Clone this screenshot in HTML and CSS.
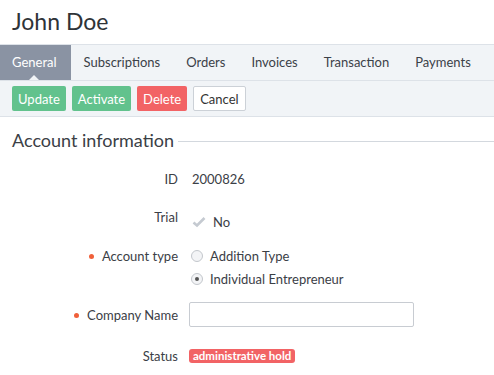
FILE: index.html
```html
<!DOCTYPE html>
<html lang="en">
<head>
  <meta charset="UTF-8" />
  <title>John Doe</title>
  <link rel="stylesheet" href="styles.css">
</head>
<body>
  <h1 class="title">John Doe</h1>

  <nav class="tabs">
    <a class="tab active">General</a>
    <a class="tab">Subscriptions</a>
    <a class="tab">Orders</a>
    <a class="tab">Invoices</a>
    <a class="tab">Transaction</a>
    <a class="tab">Payments</a>
  </nav>

  <div class="toolbar">
    <button class="btn green">Update</button>
    <button class="btn green">Activate</button>
    <button class="btn red">Delete</button>
    <button class="btn plain">Cancel</button>
  </div>

  <div class="section">
    <h2>Account information</h2>
  </div>

  <div class="form">
    <div class="row r-id">
      <div class="label">ID</div>
      <div class="value">2000826</div>
    </div>
    <div class="row r-trial">
      <div class="label">Trial</div>
      <div class="value trial">
        <svg width="14" height="12" viewBox="0 0 14 12"><path d="M1.5 6.5 L5 9.5 L12.5 2" fill="none" stroke="#c5cad1" stroke-width="2.6"/></svg>
        <span>No</span>
      </div>
    </div>
    <div class="row r-type">
      <div class="label req">Account type</div>
      <div class="value radios">
        <label class="radio"><span class="circle"></span>Addition Type</label>
        <label class="radio"><span class="circle on"></span>Individual Entrepreneur</label>
      </div>
    </div>
    <div class="row r-company">
      <div class="label req">Company Name</div>
      <div class="value"><input type="text" class="field"></div>
    </div>
    <div class="row r-status">
      <div class="label">Status</div>
      <div class="value"><span class="badge">administrative hold</span></div>
    </div>
  </div>
</body>
</html>
```

FILE: styles.css
```css
body {
  margin: 0;
  font-family: Lato, "Open Sans", Arial, sans-serif;
  color: #333;
  background: white;
}

.title {
  margin: 0;
  padding: 7px 12px 0;
  height: 37px;
  font-size: 23px;
  font-weight: normal;
  color: #2f3338;
}

.tabs {
  display: flex;
  height: 35px;
  background: #f1f4f7;
  border-top: 1px solid #dde2e8;
  border-bottom: 1px solid #dde2e8;
}

.tab {
  position: relative;
  padding: 0 13px;
  line-height: 35px;
  font-size: 13px;
  color: #3b4148;
  white-space: nowrap;
}

.tab.active {
  background: #8a93a3;
  color: white;
  padding: 0 14px 0 12px;
}

.tab.active::after {
  content: "";
  position: absolute;
  left: 29px;
  bottom: 0;
  border: 5px solid transparent;
  border-bottom-color: #f1f4f7;
  border-top: 0;
}

.toolbar {
  display: flex;
  gap: 6px;
  padding: 5px 12px;
  height: 25px;
  background: #f1f4f7;
  border-bottom: 1px solid #dde2e8;
}

.btn {
  height: 25px;
  padding: 0 6px;
  border: none;
  border-radius: 2px;
  font-family: inherit;
  font-size: 13px;
  color: white;
}

.green { background: #62c28d; }
.red { background: #f26365; }

.plain {
  background: white;
  color: #333;
  border: 1px solid #ccd1d7;
}

.section {
  display: flex;
  align-items: center;
  padding: 10px 0 0 12px;
}

.section h2 {
  margin: 0;
  font-size: 18px;
  font-weight: normal;
  color: #3b4046;
  line-height: 26px;
}

.section::after {
  content: "";
  flex: 1;
  height: 1px;
  margin-left: 4px;
  margin-top: 2px;
  background: #d3d8de;
}

.form {
  padding-top: 16px;
  font-size: 13px;
}

.row {
  display: flex;
}

.label {
  width: 192px;
  text-align: right;
  padding-right: 14px;
  box-sizing: border-box;
  color: #3b4046;
  line-height: 20px;
}

.req::before {
  content: "";
  display: inline-block;
  width: 5px;
  height: 5px;
  border-radius: 50%;
  background: #f0603a;
  margin-right: 8px;
  vertical-align: 2px;
}

.value {
  line-height: 20px;
  color: #3b4046;
}

.r-trial { margin-top: 18px; }

.trial {
  display: flex;
  align-items: center;
  gap: 7px;
  padding-top: 5px;
}

.r-type { margin-top: 14px; }

.radios {
  display: flex;
  flex-direction: column;
  gap: 3px;
  margin-left: -1px;
}

.radio {
  display: flex;
  align-items: center;
  gap: 7px;
}

.circle {
  width: 10px;
  height: 10px;
  border: 1px solid #c3c7cc;
  border-radius: 50%;
  background: #f3f4f6;
  position: relative;
}

.circle.on::after {
  content: "";
  position: absolute;
  left: 3px;
  top: 3px;
  width: 4px;
  height: 4px;
  border-radius: 50%;
  background: #555;
}

.r-company {
  margin-top: 13px;
  align-items: center;
}

.field {
  width: 225px;
  height: 25px;
  box-sizing: border-box;
  border: 1px solid #c8ccd2;
  border-radius: 2px;
  margin-left: -3px;
  display: block;
}

.r-status { margin-top: 19px; }

.badge {
  display: inline-block;
  background: #f26365;
  color: white;
  font-weight: bold;
  font-size: 11.5px;
  line-height: 14px;
  padding: 0 4px;
  border-radius: 3px;
  margin-left: -3px;
  vertical-align: 1px;
}
```
